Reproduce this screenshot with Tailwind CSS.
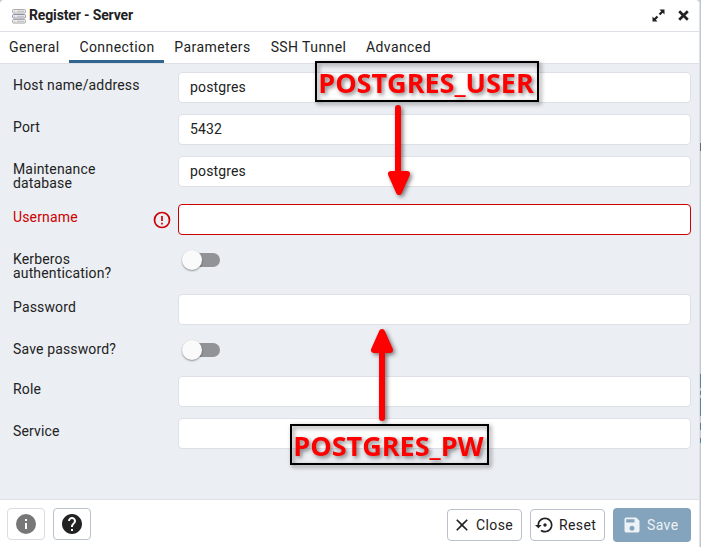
<!DOCTYPE html>
<html lang="en">
<head>
<meta charset="utf-8">
<title>Register - Server</title>
<script src="https://cdn.jsdelivr.net/npm/@tailwindcss/browser@4"></script>
</head>
<body class="relative h-[547px] w-[701px] overflow-hidden bg-[#c3c7cf] font-['Roboto',sans-serif] text-[14px] leading-[14px] tracking-[0.42px] text-[#222]">
<main class="flex h-[547px] w-[700px] flex-col rounded-t-[4px] border-r border-[#dde0e6] bg-white">
  <header class="flex h-8 shrink-0 items-center border-b border-[#dde0e6] pl-3 pr-[10px]">
    <svg class="mt-px h-[15px] w-[14px]" viewBox="0 0 14 15" fill="#eeeef2" stroke="#aaa">
      <rect x=".5" y=".5" width="13" height="3.6" rx="1.2"/><rect x=".5" y="5.5" width="13" height="3.6" rx="1.2" stroke="#9290a8"/><rect x=".5" y="10.5" width="13" height="3.6" rx="1.2"/>
      <path d="M2 2.3h1M2 7.3h1M2 12.3h1M5 2.3h7M5 7.3h7M5 12.3h7" stroke="#bbb"/>
    </svg>
    <h1 class="-mt-[2px] ml-[3px] flex-1 font-bold tracking-[-0.15px]">Register - Server</h1>
    <svg class="mr-[13px] h-[13px] w-[13px]" viewBox="0 0 13 13" fill="#222"><path d="M7.500 .5h5v5l-1.700-1.700-2.500 2.500-1.600-1.600 2.500-2.500zM.5 7.500v5h5l-1.700-1.700 2.500-2.500-1.600-1.600-2.500 2.500z"/></svg>
    <svg class="h-[11px] w-[11px]" viewBox="0 0 11 11" stroke="#222" stroke-width="2.700"><path d="M1.200 1.200l8.600 8.600M9.800 1.200l-8.600 8.600"/></svg>
  </header>
  <nav class="flex h-8 shrink-0 border-b border-[#dde0e6] pt-[8px]">
    <a class="ml-[9px] w-[60px]">General</a>
    <a class="w-[95px] border-b-[3px] border-[#326690] pl-px text-center">Connection</a>
    <a class="w-[96px] pl-px text-center">Parameters</a>
    <a class="w-[96px] pl-px text-center">SSH Tunnel</a>
    <a class="w-[84px] pl-px text-center">Advanced</a>
  </nav>
  <section class="h-[436px] shrink-0 border-b border-[#dde0e6] bg-[#ebeef3] pl-[13px] pr-2 pt-2 tracking-[0.15px]">
    <div class="flex h-[42px]"><label class="w-[165px] pt-[6px]">Host name/address</label><div class="flex h-[31px] flex-1 items-center rounded-[4px] border border-[#dde0e6] bg-white pb-[2px] pl-[11px]">postgres</div></div>
    <div class="flex h-[42px]"><label class="w-[165px] pt-[6px]">Port</label><div class="flex h-[31px] flex-1 items-center rounded-[4px] border border-[#dde0e6] bg-white pb-[2px] pl-[11px]">5432</div></div>
    <div class="flex h-[48px]"><label class="w-[165px] pt-[6px]">Maintenance<br>database</label><div class="flex h-[31px] flex-1 items-center rounded-[4px] border border-[#dde0e6] bg-white pb-[2px] pl-[11px]">postgres</div></div>
    <div class="flex h-[42px]"><label class="w-[139px] pt-[6px] text-[#cc0000]">Username</label>
      <svg class="ml-px mr-[6px] mt-[7px] h-[19px] w-[19px]" viewBox="0 0 19 19" fill="none" stroke="#cc0000" stroke-width="1.700"><circle cx="9" cy="9" r="7.500"/><path d="M9 5v5M9 11.700v1.700"/></svg>
      <div class="h-[31px] flex-1 rounded-[4px] border border-[#cc0000] bg-white"></div></div>
    <div class="flex h-[48px]"><label class="w-[165px] pt-[6px]">Kerberos<br>authentication?</label><div class="relative ml-[8px] mt-[7px] h-[14px] w-[34px] rounded-full bg-[#929396]"><span class="absolute -left-[4px] -top-[3px] size-5 rounded-full bg-[#fafafa] shadow-[0_1px_2px_rgba(0,0,0,.4)]"></span></div></div>
    <div class="flex h-[42px]"><label class="w-[165px] pt-[6px]">Password</label><div class="h-[31px] flex-1 rounded-[4px] border border-[#dde0e6] bg-white"></div></div>
    <div class="flex h-[40px]"><label class="w-[165px] pt-[6px]">Save password?</label><div class="relative ml-[8px] mt-[7px] h-[14px] w-[34px] rounded-full bg-[#929396]"><span class="absolute -left-[4px] -top-[3px] size-5 rounded-full bg-[#fafafa] shadow-[0_1px_2px_rgba(0,0,0,.4)]"></span></div></div>
    <div class="flex h-[42px]"><label class="w-[165px] pt-[6px]">Role</label><div class="h-[31px] flex-1 rounded-[4px] border border-[#dde0e6] bg-white"></div></div>
    <div class="flex h-[42px]"><label class="w-[165px] pt-[6px]">Service</label><div class="h-[31px] flex-1 rounded-[4px] border border-[#dde0e6] bg-white"></div></div>
  </section>
  <footer class="flex flex-1 items-start pl-[7px] pr-2 pt-2 tracking-[0.38px]">
    <button class="flex h-8 w-[38px] items-center justify-center rounded-[4px] border border-[#d9dce3]"><svg class="size-6" viewBox="0 0 24 24" fill="#777"><path d="M12 2a10 10 0 100 20 10 10 0 000-20zm1 15h-2v-6h2v6zm0-8h-2V7h2v2z"/></svg></button>
    <button class="ml-2 flex h-8 w-[38px] items-center justify-center rounded-[4px] border border-[#bac1cd]"><svg class="size-6" viewBox="0 0 24 24" fill="#222"><path d="M12 2C6.480 2 2 6.480 2 12s4.480 10 10 10 10-4.480 10-10S17.520 2 12 2zm1 17h-2v-2h2v2zm2.070-7.750l-.9.920C13.450 12.900 13 13.500 13 15h-2v-.5c0-1.100.45-2.100 1.170-2.830l1.240-1.260c.37-.36.59-.86.59-1.410 0-1.100-.9-2-2-2s-2 .9-2 2H8c0-2.210 1.790-4 4-4s4 1.790 4 4c0 .88-.36 1.680-.93 2.250z"/></svg></button>
    <button class="ml-auto mt-px flex h-8 w-[75px] items-center rounded-[4px] border border-[#bac1cd] pl-[4px]"><svg class="mr-[4px] size-5" viewBox="0 0 24 24" fill="#222"><path d="M19 6.410L17.590 5 12 10.590 6.410 5 5 6.410 10.590 12 5 17.590 6.410 19 12 13.410 17.590 19 19 17.590 13.410 12z"/></svg>Close</button>
    <button class="ml-2 mt-px flex h-8 w-[75px] items-center rounded-[4px] border border-[#bac1cd] pl-[4px]"><svg class="mr-[4px] size-5" viewBox="0 0 24 24" fill="#222"><path d="M14 12c0-1.100-.9-2-2-2s-2 .9-2 2 .9 2 2 2 2-.9 2-2zm-2-9c-4.970 0-9 4.030-9 9H0l4 4 4-4H5c0-3.870 3.130-7 7-7s7 3.130 7 7-3.130 7-7 7c-1.510 0-2.910-.49-4.060-1.300l-1.420 1.440C8.040 20.300 9.940 21 12 21c4.970 0 9-4.030 9-9s-4.030-9-9-9z"/></svg>Reset</button>
    <button class="ml-2 flex h-[34px] w-[78px] items-center rounded-[4px] bg-[#84a3bc] pl-[9px] text-[#edf2f6]"><svg class="mr-[5px] size-5" viewBox="0 0 24 24" fill="#edf2f6"><path d="M17 3H5c-1.110 0-2 .9-2 2v14c0 1.100.89 2 2 2h14c1.100 0 2-.9 2-2V7l-4-4zm-5 16c-1.660 0-3-1.340-3-3s1.340-3 3-3 3 1.340 3 3-1.340 3-3 3zm3-10H5V5h10v4z"/></svg>Save</button>
  </footer>
</main>
<svg class="absolute left-0 top-0 h-[547px] w-[701px]" viewBox="0 0 701 547">
  <g fill="#5c7fa5"><path d="M700 374h1v14h-1zM700 391h1v4h-1zM700 398h1v18h-1zM700 423h1v7h-1zM700 438h1v5h-1z"/><path fill="#666a72" d="M700 143h1v8h-1z"/></g>
  <g class="drop-shadow-[2px_2px_2px_rgba(0,0,0,.5)]" fill="red" stroke="red" stroke-linejoin="round" stroke-linecap="round">
    <path d="M398 108V176" stroke-width="6"/><path d="M391 174H407L399 192Z" stroke-width="6"/>
    <path d="M382 418V350" stroke-width="6"/><path d="M374 350H390L382 332Z" stroke-width="6"/>
  </g>
</svg>
<div class="absolute left-[315px] top-[61px] flex h-[41px] w-[224px] items-center justify-center whitespace-nowrap border-2 border-black pr-[2px] pt-[2px] font-['Open_Sans',sans-serif] text-[27px] font-bold leading-none tracking-[0px] text-[#f00] drop-shadow-[2px_2px_2px_rgba(0,0,0,.5)]">POSTGRES_USER</div>
<div class="absolute left-[290px] top-[424px] flex h-[41px] w-[199px] items-center justify-center whitespace-nowrap border-2 border-black pr-[2px] pt-[2px] font-['Open_Sans',sans-serif] text-[27px] font-bold leading-none tracking-[0px] text-[#f00] drop-shadow-[2px_2px_2px_rgba(0,0,0,.5)]">POSTGRES_PW</div>
</body>
</html>
